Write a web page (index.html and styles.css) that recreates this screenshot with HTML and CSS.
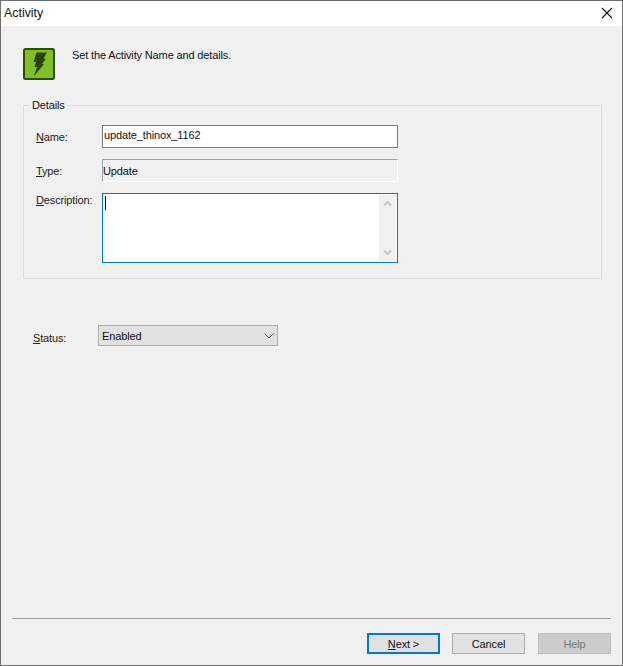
FILE: index.html
```html
<!DOCTYPE html>
<html lang="en">
<head>
<meta charset="utf-8">
<title>Activity</title>
<link rel="stylesheet" href="styles.css">
</head>
<body>
<div class="window">
  <header class="titlebar">
    <span class="title">Activity</span>
    <svg class="close" width="12" height="12" viewBox="0 0 12 12"><path d="M1 1 L11 11 M11 1 L1 11" stroke="#111" stroke-width="1.1" fill="none"/></svg>
  </header>
  <main class="content">
    <div class="intro">
      <svg class="activity-icon" width="32" height="32" viewBox="0 0 32 32">
        <rect x="1" y="1" width="30" height="30" rx="1.5" fill="#7fbf27" stroke="#2f4f00" stroke-width="2"/>
        <path d="M13.5 4.5 H24 L20.5 10.5 H23 L19 16 H21 L11 28 L14 19 H11.5 L13 14 H10.5 Z" fill="#2b4200"/>
      </svg>
      <p class="intro-text">Set the Activity Name and details.</p>
    </div>
    <fieldset class="details">
      <legend class="legend">Details</legend>
      <div class="row row-name">
        <label class="label"><u>N</u>ame:</label>
        <div class="field field-name">update_thinox_1162</div>
      </div>
      <div class="row row-type">
        <label class="label"><u>T</u>ype:</label>
        <div class="field field-type">Update</div>
      </div>
      <div class="row row-desc">
        <label class="label"><u>D</u>escription:</label>
        <div class="field field-desc">
          <span class="caret"></span>
          <div class="scrollbar">
            <svg width="9" height="7" viewBox="0 0 9 7"><path d="M1 5.5 L4.5 2 L8 5.5" stroke="#c8c8c8" stroke-width="2" fill="none"/></svg>
            <svg width="9" height="7" viewBox="0 0 9 7"><path d="M1 1.5 L4.5 5 L8 1.5" stroke="#c8c8c8" stroke-width="2" fill="none"/></svg>
          </div>
        </div>
      </div>
    </fieldset>
    <div class="status-row">
      <label class="label status-label"><u>S</u>tatus:</label>
      <div class="select">
        <span>Enabled</span>
        <svg width="10" height="6" viewBox="0 0 10 6"><path d="M0.5 0.5 L5 5 L9.5 0.5" stroke="#555" stroke-width="1" fill="none"/></svg>
      </div>
    </div>
    <footer class="footer">
      <div class="separator"></div>
      <div class="buttons">
        <button class="btn btn-default"><u>N</u>ext &gt;</button>
        <button class="btn">Cancel</button>
        <button class="btn btn-disabled">Help</button>
      </div>
    </footer>
  </main>
</div>
</body>
</html>
```
FILE: styles.css
```css
* { box-sizing: border-box; }
html, body { margin: 0; padding: 0; }
body {
  width: 623px;
  height: 666px;
  overflow: hidden;
  font-family: "Liberation Sans", Arial, sans-serif;
  font-size: 11px;
  letter-spacing: -0.14px;
  color: #111;
}
.window {
  width: 623px;
  height: 666px;
  border: 1px solid #6f6f6f;
  display: flex;
  flex-direction: column;
  background: #f0f0f0;
}
.titlebar {
  height: 25px;
  background: #fff;
  display: flex;
  align-items: center;
  justify-content: space-between;
  padding: 0 9px 2px 3px;
  flex: none;
}
.title { font-size: 12.4px; letter-spacing: 0; }
.content {
  flex: 1;
  display: flex;
  flex-direction: column;
  padding: 22px 11px 11px 22px;
}
.intro {
  display: flex;
  align-items: flex-start;
  gap: 17px;
  height: 32px;
}
.intro-text { margin: 0; line-height: 14px; }
.details {
  margin: 18px 0 0 0;
  width: 579px;
  height: 181px;
  border: 1px solid #dcdcdc;
  display: flex;
  flex-direction: column;
  padding: 13px 0 0 12px;
}
.legend {
  margin-left: -7px;
  padding: 0 3px;
  line-height: 14px;
}
.row { display: flex; align-items: flex-start; }
.label { width: 66px; flex: none; line-height: 14px; padding-top: 5px; color: #222; }
.field { width: 296px; background: #fff; }
.row-name .field, .row-type .field { height: 23px; line-height: 18px; padding-left: 1px; }
.row-type { margin-top: 11px; }
.row-desc { margin-top: 11px; }
.row-desc .label { padding-top: 0; }
.field-name { border: 1px solid #7a7a7a; }
.field-type {
  background: #f0f0f0;
  border-top: 1px solid #a0a0a0;
  border-left: 1px solid #a0a0a0;
  border-bottom: 1px solid #fff;
  border-right: 1px solid #fff;
}
.row .field-type { padding-left: 0; line-height: 22px; }
.field-desc {
  height: 70px;
  border: 1px solid #0078d7;
  display: flex;
  justify-content: space-between;
  padding: 1px 1px 1px 2px;
}
.caret { width: 1px; height: 14px; margin-top: 1px; background: #000; }
.scrollbar {
  width: 17px;
  background: #f0f0f0;
  display: flex;
  flex-direction: column;
  justify-content: space-between;
  align-items: center;
  padding: 5px 0;
}
.status-row {
  display: flex;
  align-items: flex-start;
  margin-top: 46px;
  margin-left: 10px;
}
.status-label { width: 65px; padding-top: 6px; }
.select {
  width: 180px;
  height: 21px;
  background: #e1e1e1;
  border: 1px solid #adadad;
  display: flex;
  align-items: center;
  justify-content: space-between;
  padding: 0 3px 0 3px;
}
.footer { margin-top: auto; margin-left: -11px; }
.separator { height: 1px; width: 599px; background: #a0a0a0; }
.buttons {
  display: flex;
  justify-content: flex-end;
  gap: 12px;
  padding-top: 14px;
  width: 599px;
}
.btn {
  width: 73px;
  height: 21px;
  padding: 0;
  font: inherit;
  letter-spacing: inherit;
  color: #111;
  background: #e1e1e1;
  border: 1px solid #adadad;
  border-radius: 0;
}
.btn-default { border: 2px solid #0078d7; }
.btn-disabled { margin-left: 1px; background: #cccccc; border-color: #bfbfbf; color: #787878; }
```
